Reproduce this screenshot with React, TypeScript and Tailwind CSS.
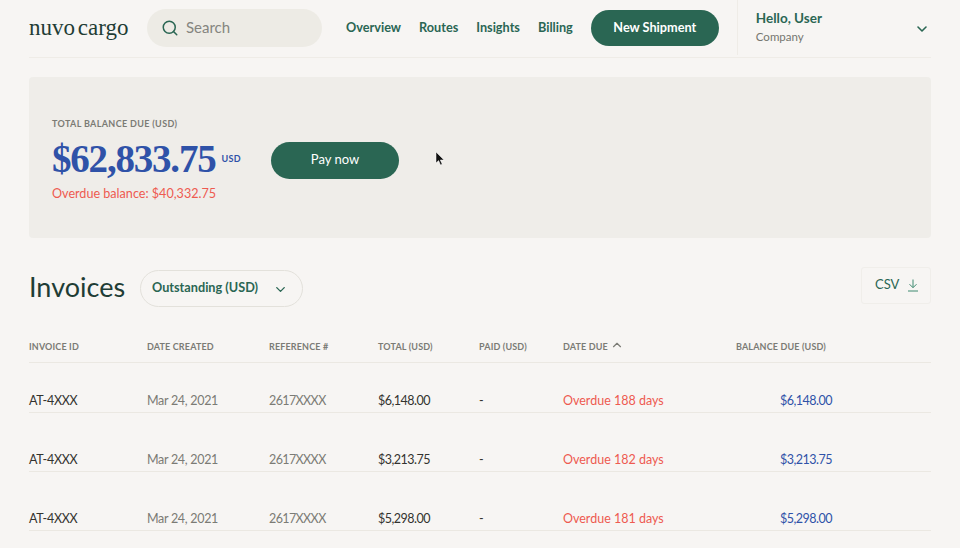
import { ChevronDown, ChevronUp, Search } from "lucide-react";

const ROWS = [
  { total: "$6,148.00", due: "Overdue 188 days", balance: "$6,148.00" },
  { total: "$3,213.75", due: "Overdue 182 days", balance: "$3,213.75" },
  { total: "$5,298.00", due: "Overdue 181 days", balance: "$5,298.00" },
];

const COLS = "grid grid-cols-[118px_122px_109px_101px_84px_173px_96px_1fr]";

function Header() {
  return (
    <header className="h-[58px] mx-[29px] pb-[2px] flex items-center border-b border-[#efece7]">
      <div className="w-[118px] font-['Liberation_Serif',serif] text-[23px] leading-[28px] text-[#1f3d35] [word-spacing:-3px]">nuvo cargo</div>
      <div className="w-[175px] h-[38px] rounded-full bg-[#edebe5] flex items-center pl-[14px] gap-[7px]">
        <Search size={18} strokeWidth={2} className="text-[#2a6653]" />
        <span className="text-[15px] text-[#85857f]">Search</span>
      </div>
      <nav className="flex items-center gap-[18px] ml-[24px] text-[12.7px] font-bold text-[#2a6653]">
        <span>Overview</span>
        <span>Routes</span>
        <span>Insights</span>
        <span>Billing</span>
      </nav>
      <button className="ml-[18px] w-[128px] h-[36px] rounded-full bg-[#2a6653] text-white text-[12.7px] font-bold">New Shipment</button>
      <div className="ml-[18px] h-full flex-1 flex items-center justify-between border-l border-[#efece7] pl-[18px] pr-[1px]">
        <div className="-mt-[1px]">
          <div className="text-[13.5px] font-bold text-[#2a6653] leading-[18px]">Hello, User</div>
          <div className="text-[11.5px] text-[#75756f] leading-[18px] mt-[1px]">Company</div>
        </div>
        <ChevronDown size={16} strokeWidth={2.4} className="text-[#2a6653] mt-[3px]" />
      </div>
    </header>
  );
}

function Balance() {
  return (
    <section className="relative mx-[29px] mt-[19px] h-[161px] rounded-[4px] bg-[#efede9] pl-[23px] pt-[41px]">
      <div className="text-[9px] font-bold tracking-[0.35px] text-[#7b7b75] leading-[12px]">TOTAL BALANCE DUE (USD)</div>
      <div className="flex items-center mt-[8px]">
        <div className="flex items-start w-[219px] -mt-[3px]">
          <span className="font-['Liberation_Serif',serif] font-bold text-[39px] leading-[47px] tracking-[-1.2px] text-[#2f52a8]">$62,833.75</span>
          <span className="ml-[6px] mt-[18px] text-[9px] leading-[12px] font-bold tracking-[0.3px] text-[#2f52a8]">USD</span>
        </div>
        <button className="w-[128px] h-[37px] rounded-full bg-[#2a6653] text-white text-[13px]">Pay now</button>
      </div>
      <div className="text-[12.6px] text-[#ee5a50] leading-[18px] mt-[3px]">Overdue balance: $40,332.75</div>
      <svg className="absolute left-[406px] top-[74px]" width="10" height="15" viewBox="0 0 10 15">
        <path d="M1 1v11l2.6-2.4L5.5 14l1.7-.8-1.9-4.2H9z" fill="#111" stroke="#fff" strokeWidth="0.5" />
      </svg>
    </section>
  );
}

function Invoices() {
  return (
    <section className="mx-[29px]">
      <div className="flex items-center mt-[29px] h-[40px]">
        <h1 className="text-[27px] text-[#1f3d35] w-[111px] leading-[36px]">Invoices</h1>
        <button className="w-[163px] h-[37px] rounded-full border border-[#e3e1db] flex items-center pl-[11px] pr-[14px] justify-between text-[12.7px] font-bold text-[#2a6653] mt-[3px]">
          <span className="-mt-[2px]">Outstanding (USD)</span>
          <ChevronDown size={15} strokeWidth={2.2} className="mt-[1px]" />
        </button>
        <button className="ml-auto w-[70px] h-[37px] rounded-[3px] border border-[#f0eeea] flex items-center pl-[13px] gap-[8px] text-[13px] text-[#2a6653] -mt-[3px]">
          <span className="-mt-[2px]">CSV</span>
          <svg width="12" height="13" viewBox="0 0 12 13" fill="none" stroke="#3f8a70" strokeWidth="1">
            <path d="M6 0.5v8M2.5 5.2L6 8.7l3.5-3.5M1 12h10" />
          </svg>
        </button>
      </div>
      <div className={`${COLS} mt-[32px] h-[24px] items-start border-b border-[#ebe8e2] text-[9px] font-bold tracking-[0.15px] text-[#7b7b75] leading-[16px]`}>
        <span>INVOICE ID</span>
        <span>DATE CREATED</span>
        <span>REFERENCE #</span>
        <span>TOTAL (USD)</span>
        <span>PAID (USD)</span>
        <span className="flex items-center gap-[2px]">
          DATE DUE
          <ChevronUp size={14} strokeWidth={2} className="-mt-[4px]" />
        </span>
        <span className="col-span-2">BALANCE DUE (USD)</span>
      </div>
      <div className="flex flex-col gap-[9px]">
        {ROWS.map((r, i) => (
          <div key={i} className={`${COLS} pt-[29px] pb-[2px] border-b border-[#ebe8e2] text-[12.5px] leading-[18px] text-[#33332f]`}>
            <span className="tracking-[-0.3px]">AT-4XXX</span>
            <span className="tracking-[-0.3px] text-[#7b7b75]">Mar 24, 2021</span>
            <span className="tracking-[-0.6px] text-[#7b7b75]">2617XXXX</span>
            <span className="tracking-[-0.5px]">{r.total}</span>
            <span>-</span>
            <span className="text-[#ee5a50]">{r.due}</span>
            <span className="tracking-[-0.5px] text-right text-[#2f52a8]">{r.balance}</span>
          </div>
        ))}
      </div>
    </section>
  );
}

export default function App() {
  return (
    <div className="w-[960px] h-[548px] overflow-hidden bg-[#f7f5f3] font-['Lato',sans-serif]">
      <Header />
      <Balance />
      <Invoices />
    </div>
  );
}
